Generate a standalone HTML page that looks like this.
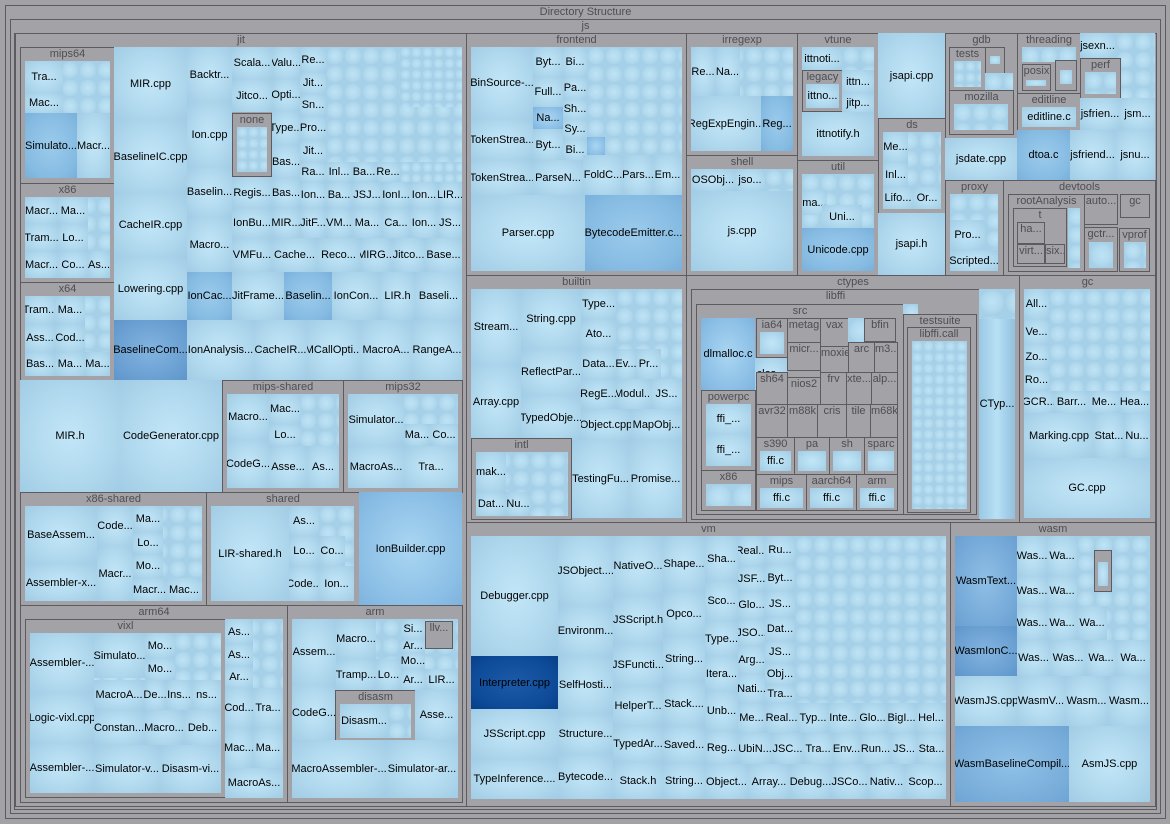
<!DOCTYPE html>
<html><head><meta charset="utf-8"><style>
*{margin:0;padding:0}
body{width:1170px;height:824px;background:#a2a1a6;position:relative;overflow:hidden;font-family:"Liberation Sans",sans-serif}
.d{position:absolute;background:#a3a2a7;border:1px solid #5b5b60;box-sizing:border-box;font-size:11px;color:#4e4e52;text-align:center;line-height:12px;overflow:hidden;white-space:nowrap}
.c{position:absolute;box-sizing:border-box;background:radial-gradient(ellipse at 50% 50%,#c2e6f8 0%,#b1d9ee 55%,#a1cce5 100%);display:flex;align-items:center;justify-content:center;font-size:11px;color:#000;overflow:hidden;white-space:nowrap}
.f{position:absolute;background:radial-gradient(closest-side,#bfe3f6,#b0d8ed 75%,#a6d0e8);background-size:18px 18px}
.s{background-size:11px 11px}
.L{background-size:26px 26px}
.b1{background:radial-gradient(ellipse,#a9d6f2 0%,#8cbfe6 70%,#7eb3dd 100%)}
.b2{background:radial-gradient(ellipse,#82b4e0 0%,#6a9fd2 70%,#5f95ca 100%)}
.b3{background:radial-gradient(ellipse,#1d5aa8 0%,#0d4a98 70%,#083f88 100%)}
.b4{background:radial-gradient(ellipse,#9bcbec 0%,#86bbe2 70%,#79afda 100%)}
</style></head><body>
<div class="d" style="left:5px;top:5px;width:1161px;height:814px">Directory Structure</div>
<div class="d" style="left:10px;top:19px;width:1151px;height:795px">js</div>
<div class="d" style="left:14px;top:33px;width:1143px;height:777px"></div>

<!-- jit -->
<div class="d" style="left:15px;top:33px;width:452px;height:774px">jit</div>
<div class="d" style="left:20px;top:47px;width:95px;height:137px">mips64</div>
<div class="f" style="left:25px;top:61px;width:85px;height:52px"></div>
<div class="c" style="left:25px;top:61px;width:38px;height:32px">Tra...</div>
<div class="c" style="left:25px;top:93px;width:38px;height:20px">Mac...</div>
<div class="c b4" style="left:25px;top:113px;width:52px;height:65px">Simulato...</div>
<div class="c" style="left:77px;top:113px;width:33px;height:65px">Macr...</div>
<div class="d" style="left:20px;top:183px;width:95px;height:100px">x86</div>
<div class="f" style="left:25px;top:197px;width:85px;height:81px"></div>
<div class="c" style="left:25px;top:197px;width:33px;height:27px">Macr...</div>
<div class="c" style="left:25px;top:224px;width:33px;height:27px">Tram...</div>
<div class="c" style="left:25px;top:251px;width:33px;height:27px">Macr...</div>
<div class="c" style="left:58px;top:197px;width:30px;height:27px">Ma...</div>
<div class="c" style="left:58px;top:224px;width:30px;height:27px">Lo...</div>
<div class="c" style="left:58px;top:251px;width:30px;height:27px">Co...</div>
<div class="c" style="left:88px;top:251px;width:22px;height:27px">As...</div>
<div class="d" style="left:20px;top:282px;width:95px;height:99px">x64</div>
<div class="f" style="left:25px;top:296px;width:85px;height:80px"></div>
<div class="c" style="left:25px;top:296px;width:30px;height:28px">Tram...</div>
<div class="c" style="left:25px;top:324px;width:30px;height:28px">Ass...</div>
<div class="c" style="left:25px;top:352px;width:30px;height:24px">Bas...</div>
<div class="c" style="left:55px;top:296px;width:30px;height:28px">Ma...</div>
<div class="c" style="left:55px;top:324px;width:30px;height:28px">Cod...</div>
<div class="c" style="left:55px;top:352px;width:30px;height:24px">Ma...</div>
<div class="c" style="left:85px;top:352px;width:25px;height:24px">Ma...</div>

<div class="c" style="left:114px;top:47px;width:73px;height:73px">MIR.cpp</div>
<div class="c" style="left:114px;top:120px;width:73px;height:73px">BaselineIC.cpp</div>
<div class="c" style="left:114px;top:193px;width:73px;height:64px">CacheIR.cpp</div>
<div class="c" style="left:114px;top:257px;width:73px;height:63px">Lowering.cpp</div>
<div class="c b2" style="left:114px;top:320px;width:73px;height:60px">BaselineCom...</div>
<div class="c" style="left:187px;top:47px;width:45px;height:55px">Backtr...</div>
<div class="c" style="left:187px;top:102px;width:45px;height:65px">Ion.cpp</div>
<div class="c" style="left:187px;top:167px;width:45px;height:50px">Baselin...</div>
<div class="c" style="left:187px;top:217px;width:45px;height:55px">Macro...</div>
<div class="c b4" style="left:187px;top:272px;width:45px;height:48px">IonCac...</div>
<div class="c" style="left:187px;top:320px;width:67px;height:60px">IonAnalysis...</div>
<div class="f" style="left:326px;top:47px;width:136px;height:115px"></div>
<div class="f s" style="left:400px;top:47px;width:62px;height:60px"></div>
<div class="c" style="left:232px;top:47px;width:40px;height:32px">Scala...</div>
<div class="c" style="left:232px;top:79px;width:40px;height:33px">Jitco...</div>
<div class="d" style="left:232px;top:113px;width:40px;height:64px">none</div>
<div class="f s" style="left:237px;top:127px;width:30px;height:45px"></div>
<div class="c" style="left:232px;top:177px;width:40px;height:31px">Regis...</div>
<div class="c" style="left:232px;top:208px;width:40px;height:30px">IonBu...</div>
<div class="c" style="left:232px;top:238px;width:40px;height:34px">VMFu...</div>
<div class="c" style="left:272px;top:47px;width:28px;height:32px">Valu...</div>
<div class="c" style="left:272px;top:79px;width:28px;height:32px">Opti...</div>
<div class="c" style="left:272px;top:111px;width:28px;height:34px">Type...</div>
<div class="c" style="left:272px;top:145px;width:28px;height:33px">Bas...</div>
<div class="c" style="left:272px;top:178px;width:28px;height:30px">Bas...</div>
<div class="c" style="left:272px;top:208px;width:28px;height:30px">MIR...</div>
<div class="c" style="left:272px;top:238px;width:45px;height:34px">Cache...</div>
<div class="c" style="left:300px;top:47px;width:26px;height:25px">Re...</div>
<div class="c" style="left:300px;top:72px;width:26px;height:22px">Jit...</div>
<div class="c" style="left:300px;top:94px;width:26px;height:22px">Sn...</div>
<div class="c" style="left:300px;top:116px;width:26px;height:24px">Pro...</div>
<div class="c" style="left:300px;top:140px;width:26px;height:22px">Jit...</div>
<div class="c" style="left:300px;top:162px;width:26px;height:20px">Ra...</div>
<div class="c" style="left:326px;top:162px;width:26px;height:20px">Inl...</div>
<div class="c" style="left:352px;top:162px;width:24px;height:20px">Ba...</div>
<div class="c" style="left:376px;top:162px;width:24px;height:20px">Re...</div>
<div class="f s" style="left:400px;top:162px;width:62px;height:20px"></div>
<div class="c" style="left:300px;top:182px;width:26px;height:26px">Ion...</div>
<div class="c" style="left:326px;top:182px;width:26px;height:26px">Ba...</div>
<div class="c" style="left:352px;top:182px;width:30px;height:26px">JSJ...</div>
<div class="c" style="left:382px;top:182px;width:28px;height:26px">IonI...</div>
<div class="c" style="left:410px;top:182px;width:28px;height:26px">Ion...</div>
<div class="c" style="left:438px;top:182px;width:24px;height:26px">LIR...</div>
<div class="c" style="left:300px;top:208px;width:26px;height:30px">JitF...</div>
<div class="c" style="left:326px;top:208px;width:26px;height:30px">VM...</div>
<div class="c" style="left:352px;top:208px;width:30px;height:30px">Ma...</div>
<div class="c" style="left:382px;top:208px;width:28px;height:30px">Ca...</div>
<div class="c" style="left:410px;top:208px;width:28px;height:30px">Ion...</div>
<div class="c" style="left:438px;top:208px;width:24px;height:30px">JS...</div>
<div class="c" style="left:317px;top:238px;width:43px;height:34px">Reco...</div>
<div class="c" style="left:360px;top:238px;width:32px;height:34px">MIRG...</div>
<div class="c" style="left:392px;top:238px;width:33px;height:34px">Jitco...</div>
<div class="c" style="left:425px;top:238px;width:37px;height:34px">Base...</div>
<div class="c" style="left:232px;top:272px;width:52px;height:48px">JitFrame...</div>
<div class="c b4" style="left:284px;top:272px;width:48px;height:48px">Baselin...</div>
<div class="c" style="left:332px;top:272px;width:48px;height:48px">IonCon...</div>
<div class="c" style="left:380px;top:272px;width:35px;height:48px">LIR.h</div>
<div class="c" style="left:415px;top:272px;width:47px;height:48px">Baseli...</div>
<div class="c" style="left:254px;top:320px;width:53px;height:60px">CacheIR...</div>
<div class="c" style="left:307px;top:320px;width:53px;height:60px">MCallOpti...</div>
<div class="c" style="left:360px;top:320px;width:52px;height:60px">MacroA...</div>
<div class="c" style="left:412px;top:320px;width:50px;height:60px">RangeA...</div>

<div class="c" style="left:20px;top:380px;width:100px;height:112px">MIR.h</div>
<div class="c" style="left:120px;top:380px;width:102px;height:112px">CodeGenerator.cpp</div>
<div class="d" style="left:222px;top:380px;width:122px;height:113px">mips-shared</div>
<div class="f" style="left:227px;top:394px;width:112px;height:94px"></div>
<div class="c" style="left:227px;top:394px;width:42px;height:46px">Macro...</div>
<div class="c" style="left:227px;top:440px;width:42px;height:48px">CodeG...</div>
<div class="c" style="left:269px;top:394px;width:32px;height:30px">Mac...</div>
<div class="c" style="left:269px;top:424px;width:32px;height:22px">Lo...</div>
<div class="c" style="left:269px;top:446px;width:38px;height:42px">Asse...</div>
<div class="c" style="left:307px;top:446px;width:32px;height:42px">As...</div>
<div class="d" style="left:343px;top:380px;width:120px;height:113px">mips32</div>
<div class="f" style="left:348px;top:394px;width:110px;height:94px"></div>
<div class="c" style="left:348px;top:394px;width:56px;height:52px">Simulator...</div>
<div class="c" style="left:348px;top:446px;width:56px;height:42px">MacroAs...</div>
<div class="c" style="left:404px;top:424px;width:26px;height:22px">Ma...</div>
<div class="c" style="left:430px;top:424px;width:28px;height:22px">Co...</div>
<div class="c" style="left:404px;top:446px;width:54px;height:42px">Tra...</div>
<div class="d" style="left:20px;top:492px;width:187px;height:114px">x86-shared</div>
<div class="f" style="left:25px;top:506px;width:177px;height:95px"></div>
<div class="c" style="left:25px;top:506px;width:72px;height:58px">BaseAssem...</div>
<div class="c" style="left:25px;top:564px;width:72px;height:37px">Assembler-x...</div>
<div class="c" style="left:97px;top:506px;width:36px;height:40px">Code...</div>
<div class="c" style="left:97px;top:546px;width:36px;height:55px">Macr...</div>
<div class="c" style="left:133px;top:506px;width:30px;height:26px">Ma...</div>
<div class="c" style="left:133px;top:532px;width:30px;height:22px">Lo...</div>
<div class="c" style="left:133px;top:554px;width:30px;height:24px">Mo...</div>
<div class="c" style="left:133px;top:578px;width:33px;height:23px">Macr...</div>
<div class="c" style="left:166px;top:578px;width:36px;height:23px">Mac...</div>
<div class="d" style="left:206px;top:492px;width:154px;height:114px">shared</div>
<div class="f" style="left:211px;top:506px;width:143px;height:95px"></div>
<div class="c" style="left:211px;top:506px;width:78px;height:95px">LIR-shared.h</div>
<div class="c" style="left:289px;top:506px;width:30px;height:30px">As...</div>
<div class="c" style="left:289px;top:536px;width:30px;height:30px">Lo...</div>
<div class="c" style="left:319px;top:536px;width:26px;height:30px">Co...</div>
<div class="c" style="left:289px;top:566px;width:30px;height:35px">Code...</div>
<div class="c" style="left:319px;top:566px;width:35px;height:35px">Ion...</div>
<div class="c b1" style="left:359px;top:492px;width:103px;height:113px">IonBuilder.cpp</div>

<div class="d" style="left:20px;top:605px;width:268px;height:198px">arm64</div>
<div class="d" style="left:25px;top:619px;width:201px;height:179px">vixl</div>
<div class="f" style="left:30px;top:633px;width:191px;height:160px"></div>
<div class="c" style="left:30px;top:633px;width:64px;height:60px">Assembler-...</div>
<div class="c" style="left:30px;top:693px;width:64px;height:50px">Logic-vixl.cpp</div>
<div class="c" style="left:30px;top:743px;width:64px;height:50px">Assembler-...</div>
<div class="c" style="left:94px;top:633px;width:51px;height:45px">Simulato...</div>
<div class="c" style="left:145px;top:633px;width:30px;height:25px">Mo...</div>
<div class="c" style="left:145px;top:658px;width:30px;height:22px">Mo...</div>
<div class="c" style="left:94px;top:680px;width:50px;height:30px">MacroA...</div>
<div class="c" style="left:144px;top:680px;width:22px;height:30px">De...</div>
<div class="c" style="left:166px;top:680px;width:26px;height:30px">Ins...</div>
<div class="c" style="left:192px;top:680px;width:29px;height:30px">ns...</div>
<div class="c" style="left:94px;top:710px;width:50px;height:35px">Constan...</div>
<div class="c" style="left:144px;top:710px;width:40px;height:35px">Macro...</div>
<div class="c" style="left:184px;top:710px;width:37px;height:35px">Deb...</div>
<div class="c" style="left:94px;top:745px;width:66px;height:48px">Simulator-v...</div>
<div class="c" style="left:160px;top:745px;width:61px;height:48px">Disasm-vi...</div>
<div class="f" style="left:225px;top:619px;width:58px;height:179px"></div>
<div class="c" style="left:225px;top:619px;width:28px;height:25px">As...</div>
<div class="c" style="left:225px;top:644px;width:28px;height:22px">As...</div>
<div class="c" style="left:225px;top:666px;width:28px;height:22px">Ar...</div>
<div class="c" style="left:225px;top:688px;width:28px;height:40px">Cod...</div>
<div class="c" style="left:253px;top:688px;width:30px;height:40px">Tra...</div>
<div class="c" style="left:225px;top:728px;width:28px;height:40px">Mac...</div>
<div class="c" style="left:253px;top:728px;width:30px;height:40px">Ma...</div>
<div class="c" style="left:225px;top:768px;width:58px;height:30px">MacroAs...</div>
<div class="d" style="left:287px;top:605px;width:176px;height:198px">arm</div>
<div class="f" style="left:292px;top:619px;width:166px;height:179px"></div>
<div class="c" style="left:292px;top:619px;width:44px;height:66px">Assem...</div>
<div class="c" style="left:292px;top:685px;width:44px;height:55px">CodeG...</div>
<div class="c" style="left:336px;top:619px;width:40px;height:40px">Macro...</div>
<div class="c" style="left:336px;top:659px;width:40px;height:31px">Tramp...</div>
<div class="c" style="left:376px;top:659px;width:25px;height:31px">Lo...</div>
<div class="c" style="left:401px;top:619px;width:24px;height:20px">Si...</div>
<div class="c" style="left:401px;top:639px;width:24px;height:14px">Ar...</div>
<div class="c" style="left:401px;top:653px;width:24px;height:16px">Mo...</div>
<div class="c" style="left:401px;top:669px;width:24px;height:21px">Ar...</div>
<div class="c" style="left:425px;top:669px;width:33px;height:21px">LIR...</div>
<div class="d" style="left:425px;top:621px;width:28px;height:28px">llv...</div>
<div class="d" style="left:335px;top:690px;width:81px;height:52px">disasm</div>
<div class="c" style="left:340px;top:704px;width:48px;height:34px">Disasm...</div>
<div class="f" style="left:388px;top:704px;width:23px;height:34px"></div>
<div class="c" style="left:415px;top:690px;width:43px;height:50px">Asse...</div>
<div class="c" style="left:292px;top:740px;width:94px;height:58px">MacroAssembler-...</div>
<div class="c" style="left:386px;top:740px;width:72px;height:58px">Simulator-ar...</div>

<!-- frontend -->
<div class="d" style="left:466px;top:33px;width:221px;height:243px">frontend</div>
<div class="f" style="left:587px;top:47px;width:95px;height:108px"></div>
<div class="c" style="left:471px;top:47px;width:62px;height:72px">BinSource-...</div>
<div class="c" style="left:471px;top:119px;width:62px;height:41px">TokenStrea...</div>
<div class="c" style="left:471px;top:160px;width:62px;height:35px">TokenStrea...</div>
<div class="c" style="left:533px;top:47px;width:30px;height:30px">Byt...</div>
<div class="c" style="left:533px;top:77px;width:30px;height:30px">Full...</div>
<div class="c b1" style="left:533px;top:107px;width:30px;height:22px">Na...</div>
<div class="c" style="left:533px;top:129px;width:30px;height:31px">Byt...</div>
<div class="c" style="left:563px;top:47px;width:24px;height:30px">Bi...</div>
<div class="c" style="left:563px;top:77px;width:24px;height:22px">Pa...</div>
<div class="c" style="left:563px;top:99px;width:24px;height:20px">Sh...</div>
<div class="c" style="left:563px;top:119px;width:24px;height:20px">Sy...</div>
<div class="c" style="left:563px;top:139px;width:24px;height:21px">Bi...</div>
<div class="c b1" style="left:587px;top:137px;width:18px;height:18px"></div>
<div class="c" style="left:533px;top:160px;width:50px;height:35px">ParseN...</div>
<div class="c" style="left:583px;top:155px;width:40px;height:40px">FoldC...</div>
<div class="c" style="left:623px;top:155px;width:30px;height:40px">Pars...</div>
<div class="c" style="left:653px;top:155px;width:29px;height:40px">Em...</div>
<div class="c" style="left:471px;top:195px;width:114px;height:76px">Parser.cpp</div>
<div class="c b4" style="left:585px;top:195px;width:97px;height:76px">BytecodeEmitter.c...</div>

<div class="d" style="left:686px;top:33px;width:112px;height:123px">irregexp</div>
<div class="f" style="left:691px;top:47px;width:102px;height:49px"></div>
<div class="c" style="left:691px;top:47px;width:24px;height:49px">Re...</div>
<div class="c" style="left:715px;top:47px;width:25px;height:49px">Na...</div>
<div class="c" style="left:691px;top:96px;width:70px;height:55px">RegExpEngin...</div>
<div class="c b4" style="left:761px;top:96px;width:32px;height:55px">Reg...</div>
<div class="d" style="left:686px;top:155px;width:112px;height:121px">shell</div>
<div class="f" style="left:765px;top:169px;width:28px;height:22px"></div>
<div class="c" style="left:691px;top:169px;width:44px;height:22px">OSObj...</div>
<div class="c" style="left:735px;top:169px;width:30px;height:22px">jso...</div>
<div class="c" style="left:691px;top:191px;width:102px;height:80px">js.cpp</div>
<div class="d" style="left:797px;top:33px;width:82px;height:128px">vtune</div>
<div class="c" style="left:802px;top:47px;width:40px;height:23px">ittnoti...</div>
<div class="f" style="left:842px;top:47px;width:32px;height:23px"></div>
<div class="d" style="left:802px;top:70px;width:41px;height:42px">legacy</div>
<div class="c" style="left:806px;top:84px;width:33px;height:24px">ittno...</div>
<div class="c" style="left:842px;top:70px;width:32px;height:23px">ittn...</div>
<div class="c" style="left:842px;top:93px;width:32px;height:20px">jitp...</div>
<div class="c" style="left:802px;top:112px;width:72px;height:44px">ittnotify.h</div>
<div class="d" style="left:797px;top:160px;width:82px;height:116px">util</div>
<div class="f" style="left:802px;top:174px;width:72px;height:54px"></div>
<div class="c" style="left:802px;top:190px;width:25px;height:25px">ma...</div>
<div class="c" style="left:822px;top:205px;width:40px;height:23px">Uni...</div>
<div class="c b4" style="left:802px;top:228px;width:72px;height:43px">Unicode.cpp</div>
<div class="c" style="left:878px;top:33px;width:67px;height:85px">jsapi.cpp</div>
<div class="d" style="left:878px;top:118px;width:68px;height:96px">ds</div>
<div class="f" style="left:883px;top:132px;width:58px;height:77px"></div>
<div class="c" style="left:883px;top:132px;width:25px;height:30px">Me...</div>
<div class="c" style="left:883px;top:162px;width:25px;height:25px">Inl...</div>
<div class="c" style="left:883px;top:187px;width:30px;height:22px">Lifo...</div>
<div class="c" style="left:913px;top:187px;width:28px;height:22px">Or...</div>
<div class="c" style="left:878px;top:213px;width:67px;height:62px">jsapi.h</div>
<div class="d" style="left:945px;top:33px;width:73px;height:106px">gdb</div>
<div class="d" style="left:949px;top:47px;width:37px;height:44px">tests</div>
<div class="f s" style="left:954px;top:61px;width:27px;height:26px"></div>
<div class="d" style="left:985px;top:47px;width:20px;height:27px"></div>
<div class="c" style="left:990px;top:56px;width:10px;height:8px"></div>
<div class="f" style="left:985px;top:73px;width:28px;height:17px"></div>
<div class="d" style="left:949px;top:90px;width:65px;height:45px">mozilla</div>
<div class="f" style="left:954px;top:104px;width:54px;height:26px"></div>
<div class="d" style="left:1017px;top:33px;width:64px;height:61px">threading</div>
<div class="f" style="left:1022px;top:47px;width:54px;height:15px"></div>
<div class="d" style="left:1022px;top:64px;width:29px;height:27px">posix</div>
<div class="c" style="left:1026px;top:80px;width:20px;height:6px"></div>
<div class="d" style="left:1055px;top:60px;width:22px;height:31px"></div>
<div class="c" style="left:1060px;top:70px;width:12px;height:14px"></div>
<div class="d" style="left:1017px;top:93px;width:64px;height:38px">editline</div>
<div class="c" style="left:1022px;top:107px;width:54px;height:20px">editline.c</div>
<div class="f" style="left:1080px;top:33px;width:75px;height:97px"></div>
<div class="c" style="left:1080px;top:33px;width:35px;height:25px">jsexn...</div>
<div class="d" style="left:1080px;top:58px;width:41px;height:41px">perf</div>
<div class="f" style="left:1085px;top:72px;width:31px;height:22px"></div>
<div class="c" style="left:1080px;top:98px;width:40px;height:32px">jsfrien...</div>
<div class="c" style="left:1120px;top:98px;width:35px;height:32px">jsm...</div>
<div class="c" style="left:945px;top:138px;width:72px;height:42px">jsdate.cpp</div>
<div class="c b4" style="left:1017px;top:130px;width:53px;height:50px">dtoa.c</div>
<div class="c" style="left:1070px;top:130px;width:45px;height:50px">jsfriend...</div>
<div class="c" style="left:1115px;top:130px;width:40px;height:50px">jsnu...</div>
<div class="d" style="left:945px;top:180px;width:59px;height:96px">proxy</div>
<div class="f" style="left:950px;top:194px;width:48px;height:77px"></div>
<div class="c" style="left:950px;top:220px;width:35px;height:30px">Pro...</div>
<div class="c" style="left:950px;top:250px;width:48px;height:21px">Scripted...</div>
<div class="d" style="left:1003px;top:180px;width:153px;height:96px">devtools</div>
<div class="d" style="left:1008px;top:194px;width:77px;height:78px">rootAnalysis</div>
<div class="d" style="left:1013px;top:208px;width:54px;height:59px">t</div>
<div class="d" style="left:1017px;top:222px;width:28px;height:22px">ha...</div>
<div class="d" style="left:1017px;top:244px;width:28px;height:20px">virt...</div>
<div class="d" style="left:1045px;top:244px;width:20px;height:20px">six...</div>
<div class="f" style="left:1068px;top:208px;width:12px;height:60px"></div>
<div class="d" style="left:1084px;top:194px;width:34px;height:31px">auto...</div>
<div class="d" style="left:1120px;top:194px;width:30px;height:24px">gc</div>
<div class="d" style="left:1084px;top:227px;width:34px;height:45px">gctr...</div>
<div class="f L" style="left:1089px;top:242px;width:24px;height:26px"></div>
<div class="d" style="left:1119px;top:228px;width:31px;height:44px">vprof</div>
<div class="f" style="left:1124px;top:242px;width:22px;height:26px"></div>

<!-- builtin -->
<div class="d" style="left:466px;top:275px;width:221px;height:248px">builtin</div>
<div class="f" style="left:616px;top:289px;width:66px;height:90px"></div>
<div class="c" style="left:471px;top:289px;width:50px;height:76px">Stream...</div>
<div class="c" style="left:521px;top:289px;width:60px;height:60px">String.cpp</div>
<div class="c" style="left:581px;top:289px;width:35px;height:30px">Type...</div>
<div class="c" style="left:581px;top:319px;width:35px;height:30px">Ato...</div>
<div class="c" style="left:521px;top:349px;width:60px;height:46px">ReflectPar...</div>
<div class="c" style="left:471px;top:365px;width:50px;height:73px">Array.cpp</div>
<div class="c" style="left:581px;top:349px;width:35px;height:30px">Data...</div>
<div class="c" style="left:616px;top:349px;width:20px;height:30px">Ev...</div>
<div class="c" style="left:636px;top:349px;width:25px;height:30px">Pr...</div>
<div class="c" style="left:581px;top:379px;width:35px;height:30px">RegE...</div>
<div class="c" style="left:616px;top:379px;width:35px;height:30px">Modul...</div>
<div class="c" style="left:651px;top:379px;width:31px;height:30px">JS...</div>
<div class="c" style="left:521px;top:395px;width:60px;height:45px">TypedObje...</div>
<div class="c" style="left:581px;top:409px;width:50px;height:31px">Object.cpp</div>
<div class="c" style="left:631px;top:409px;width:51px;height:31px">MapObj...</div>
<div class="d" style="left:471px;top:438px;width:101px;height:82px">intl</div>
<div class="f" style="left:476px;top:452px;width:92px;height:64px"></div>
<div class="c" style="left:476px;top:452px;width:30px;height:40px">mak...</div>
<div class="c" style="left:476px;top:492px;width:30px;height:24px">Dat...</div>
<div class="c" style="left:506px;top:492px;width:24px;height:24px">Nu...</div>
<div class="c" style="left:572px;top:440px;width:57px;height:78px">TestingFu...</div>
<div class="c" style="left:629px;top:440px;width:53px;height:78px">Promise...</div>

<!-- ctypes -->
<div class="d" style="left:686px;top:275px;width:334px;height:248px">ctypes</div>
<div class="d" style="left:691px;top:289px;width:289px;height:231px">libffi</div>
<div class="c b4" style="left:979px;top:289px;width:36px;height:230px;background:linear-gradient(90deg,#9ac8e4,#b8e0f5 50%,#92c0de)">CTyp...</div>
<div class="f L" style="left:979px;top:289px;width:36px;height:30px"></div>
<div class="d" style="left:696px;top:304px;width:208px;height:211px">src</div>
<div class="f" style="left:903px;top:304px;width:15px;height:10px"></div>
<div class="d" style="left:903px;top:314px;width:74px;height:201px">testsuite</div>
<div class="d" style="left:907px;top:327px;width:64px;height:186px">libffi.call</div>
<div class="f s" style="left:912px;top:341px;width:55px;height:168px"></div>
<div class="c b1" style="left:701px;top:318px;width:54px;height:72px">dlmalloc.c</div>
<div class="c" style="left:755px;top:358px;width:32px;height:32px">clos...</div>
<div class="d" style="left:701px;top:390px;width:55px;height:81px">powerpc</div>
<div class="c" style="left:706px;top:404px;width:45px;height:30px">ffi_...</div>
<div class="c" style="left:706px;top:434px;width:45px;height:32px">ffi_...</div>
<div class="d" style="left:701px;top:470px;width:55px;height:41px">x86</div>
<div class="f L" style="left:706px;top:484px;width:45px;height:22px"></div>
<div class="d" style="left:756px;top:318px;width:32px;height:40px">ia64</div>
<div class="c" style="left:760px;top:332px;width:24px;height:22px"></div>
<div class="d" style="left:787px;top:318px;width:34px;height:25px">metag</div>
<div class="d" style="left:787px;top:342px;width:34px;height:29px">micr...</div>
<div class="d" style="left:820px;top:318px;width:29px;height:29px">vax</div>
<div class="d" style="left:820px;top:346px;width:29px;height:28px">moxie</div>
<div class="f L" style="left:848px;top:318px;width:16px;height:24px"></div>
<div class="d" style="left:864px;top:318px;width:32px;height:24px">bfin</div>
<div class="d" style="left:848px;top:342px;width:27px;height:31px">arc</div>
<div class="d" style="left:874px;top:342px;width:24px;height:31px">m3...</div>
<div class="d" style="left:756px;top:372px;width:32px;height:34px">sh64</div>
<div class="d" style="left:787px;top:377px;width:34px;height:29px">nios2</div>
<div class="d" style="left:820px;top:372px;width:27px;height:33px">frv</div>
<div class="d" style="left:846px;top:372px;width:26px;height:33px">xte...</div>
<div class="d" style="left:871px;top:372px;width:27px;height:33px">alp...</div>
<div class="d" style="left:756px;top:404px;width:32px;height:34px">avr32</div>
<div class="d" style="left:787px;top:404px;width:31px;height:34px">m88k</div>
<div class="d" style="left:817px;top:404px;width:30px;height:34px">cris</div>
<div class="d" style="left:846px;top:404px;width:25px;height:34px">tile</div>
<div class="d" style="left:870px;top:404px;width:28px;height:34px">m68k</div>
<div class="d" style="left:756px;top:437px;width:39px;height:38px">s390</div>
<div class="c" style="left:760px;top:451px;width:31px;height:20px">ffi.c</div>
<div class="d" style="left:794px;top:437px;width:36px;height:38px">pa</div>
<div class="c" style="left:798px;top:451px;width:28px;height:20px"></div>
<div class="d" style="left:829px;top:437px;width:36px;height:38px">sh</div>
<div class="c" style="left:833px;top:451px;width:28px;height:20px"></div>
<div class="d" style="left:864px;top:437px;width:34px;height:38px">sparc</div>
<div class="c" style="left:868px;top:451px;width:26px;height:20px"></div>
<div class="d" style="left:756px;top:474px;width:51px;height:37px">mips</div>
<div class="c" style="left:760px;top:488px;width:43px;height:20px">ffi.c</div>
<div class="d" style="left:806px;top:474px;width:51px;height:37px">aarch64</div>
<div class="c" style="left:810px;top:488px;width:43px;height:20px">ffi.c</div>
<div class="d" style="left:856px;top:474px;width:42px;height:37px">arm</div>
<div class="c" style="left:860px;top:488px;width:34px;height:20px">ffi.c</div>

<!-- gc -->
<div class="d" style="left:1019px;top:275px;width:137px;height:248px">gc</div>
<div class="f" style="left:1049px;top:289px;width:101px;height:102px"></div>
<div class="c" style="left:1024px;top:289px;width:25px;height:30px">All...</div>
<div class="c" style="left:1024px;top:319px;width:25px;height:25px">Ve...</div>
<div class="c" style="left:1024px;top:344px;width:25px;height:25px">Zo...</div>
<div class="c" style="left:1024px;top:369px;width:25px;height:22px">Ro...</div>
<div class="c" style="left:1024px;top:391px;width:30px;height:22px">GCR...</div>
<div class="c" style="left:1054px;top:391px;width:35px;height:22px">Barr...</div>
<div class="c" style="left:1089px;top:391px;width:30px;height:22px">Me...</div>
<div class="c" style="left:1119px;top:391px;width:31px;height:22px">Hea...</div>
<div class="c" style="left:1024px;top:413px;width:70px;height:45px">Marking.cpp</div>
<div class="c" style="left:1094px;top:413px;width:30px;height:45px">Stat...</div>
<div class="c" style="left:1124px;top:413px;width:26px;height:45px">Nu...</div>
<div class="c" style="left:1024px;top:458px;width:126px;height:60px">GC.cpp</div>

<!-- vm -->
<div class="d" style="left:466px;top:522px;width:485px;height:285px">vm</div>
<div class="f" style="left:795px;top:536px;width:151px;height:167px"></div>
<div class="c" style="left:471px;top:536px;width:87px;height:120px">Debugger.cpp</div>
<div class="c b3" style="left:471px;top:656px;width:87px;height:53px">Interpreter.cpp</div>
<div class="c" style="left:471px;top:709px;width:87px;height:50px">JSScript.cpp</div>
<div class="c" style="left:471px;top:759px;width:87px;height:40px">TypeInference....</div>
<div class="c" style="left:558px;top:536px;width:55px;height:70px">JSObject....</div>
<div class="c" style="left:558px;top:606px;width:55px;height:50px">Environm...</div>
<div class="c" style="left:558px;top:656px;width:55px;height:58px">SelfHosti...</div>
<div class="c" style="left:558px;top:714px;width:55px;height:40px">Structure...</div>
<div class="c" style="left:558px;top:754px;width:55px;height:45px">Bytecode...</div>
<div class="c" style="left:613px;top:536px;width:50px;height:60px">NativeO...</div>
<div class="c" style="left:613px;top:596px;width:50px;height:48px">JSScript.h</div>
<div class="c" style="left:613px;top:644px;width:50px;height:42px">JSFuncti...</div>
<div class="c" style="left:613px;top:686px;width:50px;height:40px">HelperT...</div>
<div class="c" style="left:613px;top:726px;width:50px;height:36px">TypedAr...</div>
<div class="c" style="left:613px;top:762px;width:50px;height:37px">Stack.h</div>
<div class="c" style="left:663px;top:536px;width:42px;height:55px">Shape...</div>
<div class="c" style="left:663px;top:591px;width:42px;height:45px">Opco...</div>
<div class="c" style="left:663px;top:636px;width:42px;height:45px">String...</div>
<div class="c" style="left:663px;top:681px;width:42px;height:45px">Stack....</div>
<div class="c" style="left:663px;top:726px;width:42px;height:37px">Saved...</div>
<div class="c" style="left:663px;top:763px;width:42px;height:36px">String...</div>
<div class="c" style="left:705px;top:536px;width:33px;height:45px">Sha...</div>
<div class="c" style="left:705px;top:581px;width:33px;height:40px">Sco...</div>
<div class="c" style="left:705px;top:621px;width:33px;height:35px">Type...</div>
<div class="c" style="left:705px;top:656px;width:33px;height:35px">Itera...</div>
<div class="c" style="left:705px;top:691px;width:33px;height:40px">Unb...</div>
<div class="c" style="left:705px;top:731px;width:33px;height:33px">Reg...</div>
<div class="c" style="left:705px;top:764px;width:43px;height:35px">Object...</div>
<div class="c" style="left:738px;top:536px;width:27px;height:30px">Real...</div>
<div class="c" style="left:738px;top:566px;width:27px;height:25px">JSF...</div>
<div class="c" style="left:738px;top:591px;width:27px;height:28px">Glo...</div>
<div class="c" style="left:738px;top:619px;width:27px;height:27px">JSO...</div>
<div class="c" style="left:738px;top:646px;width:27px;height:28px">Arg...</div>
<div class="c" style="left:738px;top:674px;width:27px;height:29px">Nati...</div>
<div class="c" style="left:765px;top:536px;width:30px;height:28px">Ru...</div>
<div class="c" style="left:765px;top:564px;width:30px;height:27px">Byt...</div>
<div class="c" style="left:765px;top:591px;width:30px;height:26px">JS...</div>
<div class="c" style="left:765px;top:617px;width:30px;height:24px">Dat...</div>
<div class="c" style="left:765px;top:641px;width:30px;height:22px">JS...</div>
<div class="c" style="left:765px;top:663px;width:30px;height:22px">Obj...</div>
<div class="c" style="left:765px;top:685px;width:30px;height:18px">Tra...</div>
<div class="c" style="left:738px;top:703px;width:27px;height:30px">Me...</div>
<div class="c" style="left:765px;top:703px;width:33px;height:30px">Real...</div>
<div class="c" style="left:798px;top:703px;width:30px;height:30px">Typ...</div>
<div class="c" style="left:828px;top:703px;width:30px;height:30px">Inte...</div>
<div class="c" style="left:858px;top:703px;width:29px;height:30px">Glo...</div>
<div class="c" style="left:887px;top:703px;width:29px;height:30px">BigI...</div>
<div class="c" style="left:916px;top:703px;width:30px;height:30px">Hel...</div>
<div class="c" style="left:738px;top:733px;width:34px;height:31px">UbiN...</div>
<div class="c" style="left:772px;top:733px;width:31px;height:31px">JSC...</div>
<div class="c" style="left:803px;top:733px;width:30px;height:31px">Tra...</div>
<div class="c" style="left:833px;top:733px;width:27px;height:31px">Env...</div>
<div class="c" style="left:860px;top:733px;width:31px;height:31px">Run...</div>
<div class="c" style="left:891px;top:733px;width:26px;height:31px">JS...</div>
<div class="c" style="left:917px;top:733px;width:29px;height:31px">Sta...</div>
<div class="c" style="left:748px;top:764px;width:42px;height:35px">Array...</div>
<div class="c" style="left:790px;top:764px;width:41px;height:35px">Debug...</div>
<div class="c" style="left:831px;top:764px;width:37px;height:35px">JSCo...</div>
<div class="c" style="left:868px;top:764px;width:37px;height:35px">Nativ...</div>
<div class="c" style="left:905px;top:764px;width:41px;height:35px">Scop...</div>

<!-- wasm -->
<div class="d" style="left:950px;top:522px;width:206px;height:285px">wasm</div>
<div class="f" style="left:1077px;top:536px;width:73px;height:104px"></div>
<div class="c b2" style="left:955px;top:536px;width:62px;height:90px;background:radial-gradient(ellipse,#8fbfe6,#75a9d8 70%,#6a9fd0)">WasmText...</div>
<div class="c b2" style="left:955px;top:626px;width:62px;height:50px">WasmIonC...</div>
<div class="c" style="left:955px;top:676px;width:62px;height:50px">WasmJS.cpp</div>
<div class="c b4" style="left:955px;top:726px;width:114px;height:76px;background:radial-gradient(ellipse,#8fc1e8,#7aaeda 70%,#6ea4d4)">WasmBaselineCompil...</div>
<div class="c" style="left:1069px;top:726px;width:81px;height:76px">AsmJS.cpp</div>
<div class="c" style="left:1017px;top:536px;width:30px;height:40px">Was...</div>
<div class="c" style="left:1047px;top:536px;width:30px;height:40px">Wa...</div>
<div class="c" style="left:1017px;top:576px;width:30px;height:30px">Was...</div>
<div class="c" style="left:1047px;top:576px;width:30px;height:30px">Wa...</div>
<div class="c" style="left:1017px;top:606px;width:30px;height:34px">Was...</div>
<div class="c" style="left:1047px;top:606px;width:30px;height:34px">Wa...</div>
<div class="c" style="left:1077px;top:606px;width:30px;height:34px">Wa...</div>
<div class="d" style="left:1094px;top:550px;width:18px;height:42px"></div>
<div class="c" style="left:1098px;top:562px;width:10px;height:24px"></div>
<div class="c" style="left:1017px;top:640px;width:33px;height:36px">Was...</div>
<div class="c" style="left:1050px;top:640px;width:36px;height:36px">Was...</div>
<div class="c" style="left:1086px;top:640px;width:30px;height:36px">Wa...</div>
<div class="c" style="left:1116px;top:640px;width:34px;height:36px">Wa...</div>
<div class="c" style="left:1017px;top:676px;width:48px;height:50px">WasmV...</div>
<div class="c" style="left:1065px;top:676px;width:43px;height:50px">Wasm...</div>
<div class="c" style="left:1108px;top:676px;width:42px;height:50px">Wasm...</div>
</body></html>
